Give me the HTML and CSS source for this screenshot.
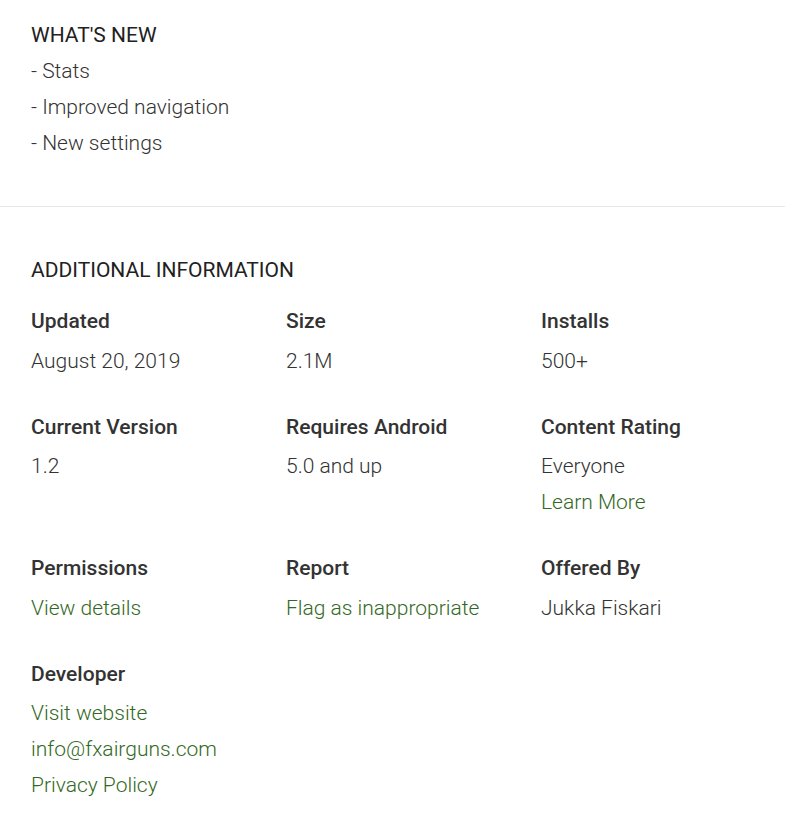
FILE: index.html
```html
<!DOCTYPE html>
<html lang="en">

<head>
    <meta charset="UTF-8">
    <meta name="viewport" content="width=device-width, initial-scale=1.0">
    <link rel="stylesheet" href="styles.css">
    <title>App details</title>
</head>

<body>
    <div class="app">
        <section class="whatsNew">
            <h2 class="heading">WHAT'S NEW</h2>
            <div class="lines">
                <div>- Stats</div>
                <div>- Improved navigation</div>
                <div>- New settings</div>
            </div>
        </section>

        <section class="additional">
            <h2 class="heading">ADDITIONAL INFORMATION</h2>
            <div class="grid">
                <div class="item">
                    <div class="label">Updated</div>
                    <div class="value">August 20, 2019</div>
                </div>
                <div class="item">
                    <div class="label">Size</div>
                    <div class="value">2.1M</div>
                </div>
                <div class="item">
                    <div class="label">Installs</div>
                    <div class="value">500+</div>
                </div>
                <div class="item">
                    <div class="label">Current Version</div>
                    <div class="value">1.2</div>
                </div>
                <div class="item">
                    <div class="label">Requires Android</div>
                    <div class="value">5.0 and up</div>
                </div>
                <div class="item">
                    <div class="label">Content Rating</div>
                    <div class="value">Everyone</div>
                    <div class="value"><a href="#">Learn More</a></div>
                </div>
                <div class="item">
                    <div class="label">Permissions</div>
                    <div class="value"><a href="#">View details</a></div>
                </div>
                <div class="item">
                    <div class="label">Report</div>
                    <div class="value"><a href="#">Flag as inappropriate</a></div>
                </div>
                <div class="item">
                    <div class="label">Offered By</div>
                    <div class="value">Jukka Fiskari</div>
                </div>
                <div class="item">
                    <div class="label">Developer</div>
                    <div class="value"><a href="#">Visit website</a></div>
                    <div class="value"><a href="#">info@fxairguns.com</a></div>
                    <div class="value"><a href="#">Privacy Policy</a></div>
                </div>
            </div>
        </section>
    </div>
</body>

</html>
```

FILE: styles.css
```css
body {
    margin: 0;
    background-color: #fff;
    color: #333;
    font-family: Roboto, "Liberation Sans", sans-serif;
}

.app {
    display: flex;
    flex-direction: column;
}

.heading {
    margin: 0;
    font-size: 21px;
    font-weight: 400;
    line-height: 36px;
    color: #212121;
}

.whatsNew {
    padding: 17px 31px 45px;
    border-bottom: 1px solid #e6e6e6;
}

.lines {
    font-size: 21px;
    font-weight: 300;
    line-height: 36px;
}

.additional {
    padding: 45px 31px 20px;
}

.grid {
    display: grid;
    grid-template-columns: 255px 255px 1fr;
    row-gap: 30px;
    margin-top: 15px;
}

.label {
    font-size: 21px;
    font-weight: 500;
    line-height: 36px;
    margin-bottom: 3.5px;
}

.value {
    font-size: 21px;
    font-weight: 300;
    line-height: 36px;
}

.value a {
    color: #33691e;
    text-decoration: none;
}
```
